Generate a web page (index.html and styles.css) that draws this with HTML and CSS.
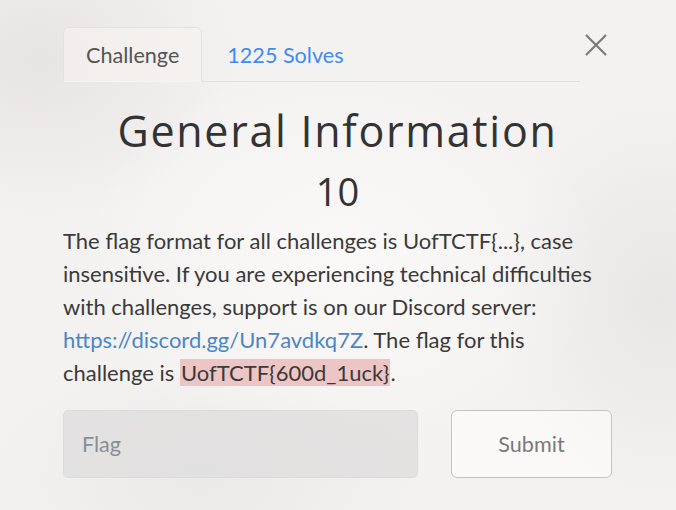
FILE: index.html
```html
<!DOCTYPE html>
<html lang="en">
<head>
<meta charset="utf-8">
<title>General Information</title>
<link rel="stylesheet" href="styles.css">
</head>
<body>
<div class="modal">
  <div class="header">
    <nav class="tabs">
      <a class="tab active">Challenge</a>
      <a class="tab link">1225 Solves</a>
    </nav>
    <button class="close" aria-label="Close">
      <svg width="24" height="24" viewBox="0 0 24 24"><path d="M2 2 L22 22 M22 2 L2 22" stroke="#7a7a7a" stroke-width="2.2" fill="none"/></svg>
    </button>
  </div>
  <h2 class="title">General Information</h2>
  <h3 class="value">10</h3>
  <p class="desc">The flag format for all challenges is UofTCTF{...}, case insensitive. If you are experiencing technical difficulties with challenges, support is on our Discord server: <a class="dlink">https://discord.gg/Un7avdkq7Z</a>. The flag for this challenge is <mark class="flag">UofTCTF{600d_1uck}</mark>.</p>
  <div class="form">
    <div class="input">Flag</div>
    <div class="submit">Submit</div>
  </div>
</div>
</body>
</html>
```

FILE: styles.css
```css
html, body {
  margin: 0;
  padding: 0;
}
body {
  width: 676px;
  height: 510px;
  overflow: hidden;
  font-family: Lato, "Liberation Sans", sans-serif;
  color: #333;
  background:
    radial-gradient(ellipse 260px 200px at 340px 260px, rgba(252,250,248,0.9), rgba(252,250,248,0) 100%),
    radial-gradient(ellipse 200px 160px at 40px 60px, rgba(225,222,222,0.7), rgba(225,222,222,0) 100%),
    radial-gradient(ellipse 160px 200px at 660px 300px, rgba(228,226,226,0.7), rgba(228,226,226,0) 100%),
    radial-gradient(ellipse 220px 120px at 200px 480px, rgba(230,228,228,0.6), rgba(230,228,228,0) 100%),
    #f4f2f0;
}
.modal {
  padding: 27px 64px 0 63px;
}
.header {
  display: flex;
  align-items: flex-end;
  gap: 4px;
}
.tabs {
  flex: 0 0 517px;
  display: flex;
  border-bottom: 1px solid #e3e1df;
}
.tab {
  font-size: 21.6px;
  line-height: 33px;
  padding: 11px 22px 9px 22px;
  border: 1px solid transparent;
  border-radius: 6px 6px 0 0;
  margin-bottom: -1px;
}
.tab.active {
  color: #555;
  border-color: #e3e1df #e3e1df #f6f4f2;
  background: rgba(246,244,242,0.6);
}
.tab.link {
  color: #3c8cf2;
  padding-left: 24px;
}
.close {
  border: 0;
  background: none;
  padding: 0;
  margin: 0 0 25px 0;
  width: 24px;
  height: 24px;
}
.close svg { display: block; }
.title {
  margin: 22px 0 0;
  font-family: "Open Sans", "Noto Sans", sans-serif;
  font-size: 43px;
  font-weight: 400;
  line-height: 1.25;
  letter-spacing: 1.7px;
  text-align: center;
  color: #333;
}
.value {
  margin: 11px 0 0;
  font-family: "Open Sans", "Noto Sans", sans-serif;
  font-size: 38px;
  font-weight: 400;
  line-height: 1.2;
  text-align: center;
  color: #333;
}
.desc {
  margin: 11px 0 0;
  font-size: 22px;
  line-height: 32.8px;
  color: #3a3a3a;
}
.dlink {
  color: #4a86c5;
}
.flag {
  background: #eec5c5;
  color: #3a3a3a;
  padding: 0 1px;
}
.form {
  display: flex;
  gap: 33px;
  margin-top: 21px;
}
.input {
  flex: 0 0 355px;
  box-sizing: border-box;
  height: 68px;
  border: 1px solid #dcdada;
  border-radius: 5px;
  background: rgba(222,220,220,0.75);
  color: #8a8d91;
  font-size: 21.6px;
  display: flex;
  align-items: center;
  padding-left: 18px;
}
.submit {
  flex: 0 0 161px;
  box-sizing: border-box;
  height: 68px;
  border: 1.5px solid #c4c4c4;
  border-radius: 6px;
  background: rgba(255,255,255,0.5);
  color: #7a7a7a;
  font-size: 21.6px;
  display: flex;
  align-items: center;
  justify-content: center;
}
```
